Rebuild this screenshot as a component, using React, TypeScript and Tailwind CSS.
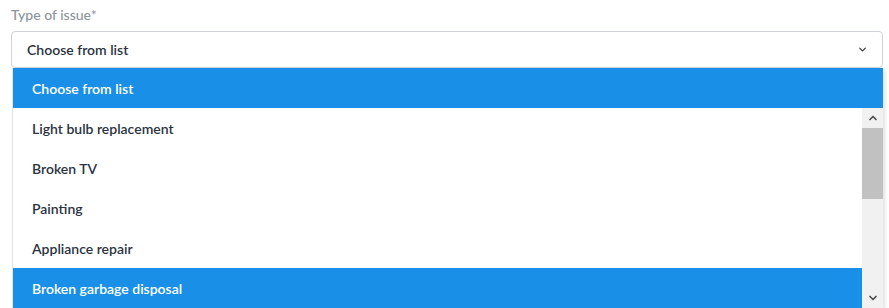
import { ChevronDown, ChevronUp } from 'lucide-react'

const OPTIONS = [
  'Light bulb replacement',
  'Broken TV',
  'Painting',
  'Appliance repair',
  'Broken garbage disposal',
]

export default function App() {
  return (
    <div className="h-[308px] w-[889px] overflow-hidden bg-white pl-[11px] pr-[6px] pt-[5px] font-['Lato',sans-serif]">
      <label className="block h-[26px] text-[14px] font-medium leading-[20px] text-[#8e949b]">Type of issue*</label>
      <div className="flex h-[37px] items-center justify-between rounded-[4px] border border-[#cfd3d7] bg-white pl-[15px] pr-[14px]">
        <span className="text-[14px] font-semibold text-[#2b3340]">Choose from list</span>
        <ChevronDown className="h-[11px] w-[11px] text-[#333]" strokeWidth={2.5} />
      </div>
      <div className="ml-[1px] border-l border-[#e3e3e3] shadow-[2px_2px_4px_rgba(0,0,0,0.12)]">
        <div className="flex h-[40px] items-center bg-[#1a8fe8] pl-[19px] text-[14px] font-semibold text-white">
          Choose from list
        </div>
        <div className="flex">
          <div className="flex-1">
            {OPTIONS.map((o, i) => (
              <div
                key={o}
                className={
                  i === OPTIONS.length - 1
                    ? 'flex h-[40px] items-center bg-[#1a8fe8] pl-[19px] text-[14px] font-semibold text-white'
                    : 'flex h-[40px] items-center bg-white pl-[19px] text-[14px] font-semibold text-[#2b3340]'
                }
              >
                {o}
              </div>
            ))}
          </div>
          <div className="flex w-[21px] flex-col bg-[#f1f1f1]">
            <div className="flex h-[20px] items-center justify-center">
              <ChevronUp className="h-[12px] w-[12px] text-[#505050]" strokeWidth={3.5} />
            </div>
            <div className="h-[71px] bg-[#c1c1c1]" />
            <div className="flex-1" />
            <div className="flex h-[20px] items-center justify-center">
              <ChevronDown className="h-[12px] w-[12px] text-[#505050]" strokeWidth={3.5} />
            </div>
          </div>
        </div>
      </div>
    </div>
  )
}
